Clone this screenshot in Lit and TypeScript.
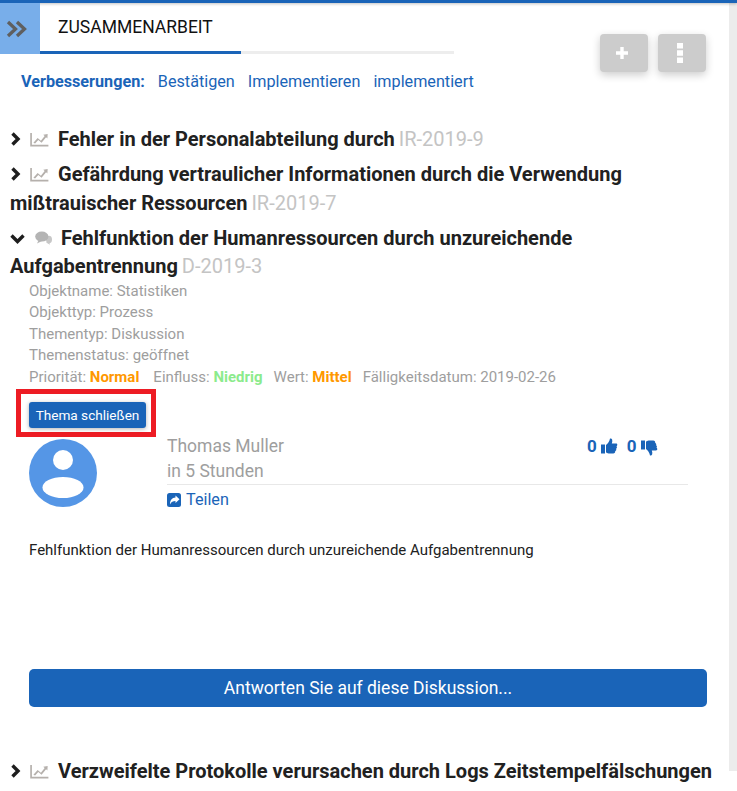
import { LitElement, html, css, svg } from "lit";
import { customElement } from "lit/decorators.js";

const chart = html`<svg class="ic" viewBox="0 0 20 16"><path d="M1 1v13.500h18.500" fill="none" stroke="#b5b0ac" stroke-width="1.800"/><path d="M3.500 11.500l4.500-5.200 3.500 3 4-5-1.500-1.300 4.700-.8-.3 4.800-1.400-1.400-4.800 5.800-3.500-3-3.400 3.800z" fill="#b5b0ac"/></svg>`;
const right = html`<svg class="ch" viewBox="0 0 11 14"><path d="M2.500 1.500l5.500 5.500-5.500 5.500" fill="none" stroke="#1e1e1e" stroke-width="3.400"/></svg>`;
const down = html`<svg class="chd" viewBox="0 0 15 12"><path d="M1.500 2.500l6 6 6-6" fill="none" stroke="#1e1e1e" stroke-width="3.400"/></svg>`;
const comments = html`<svg class="cm" viewBox="0 0 17 14"><ellipse cx="14" cy="8.500" rx="3" ry="3.800" fill="#c7c7c7"/><path d="M15 13.800l-4-2.300 3-1z" fill="#c7c7c7"/><ellipse cx="6.800" cy="5.600" rx="6.600" ry="5" fill="#b4b4b4"/><path d="M2 12.500l2-4 3 1.500z" fill="#b4b4b4"/></svg>`;
const thumb = svg`<path d="M0 6.500h4v9H0z"/><path d="M5 7c2-1.500 3.500-3.500 4-6.500 2-.5 3 1.500 1.800 5h4.200c1.800 0 1.500 2.300.5 2.700.8 1 .4 2.200-.4 2.500.5 1 0 2.200-.9 2.400.2 1.200-.5 2.400-2 2.400H9C7 15.500 6 15 5 14.500z"/>`;

@customElement("app-root")
export class AppRoot extends LitElement {
  static styles = css`
    :host { display: block; width: 737px; height: 791px; overflow: hidden; position: relative; background: #fff; font-family: Roboto, sans-serif; color: #212121; }
    * { box-sizing: border-box; }
    .topline { height: 3px; background: #1a64b8; box-shadow: 0 1px 3px rgba(0,0,0,.25); position: relative; }
    .wrap { display: flex; height: 788px; }
    .main { width: 729px; flex: none; position: relative; }
    .scroll { width: 8px; background: #ececec; height: 768px; }
    .tabs { display: flex; height: 51px; }
    .toggle { width: 40px; background: #78aeea; height: 51px; display: flex; align-items: center; justify-content: center; }
    .toggle svg { width: 22px; height: 18px; margin-left: -6px; }
    .tabbar { width: 414px; border-bottom: 3px solid #ededed; height: 51px; }
    .tab { width: 201px; height: 51px; border-bottom: 3px solid #1a64b8; padding: 14px 0 0 18px; font-size: 17.500px; line-height: 20px; color: #111; }
    .fabs { position: absolute; top: 31px; left: 600px; display: flex; gap: 10px; }
    .fab { width: 48px; height: 38px; border-radius: 4px; background: #cccccc; box-shadow: 0 3px 8px rgba(0,0,0,.2); display: flex; align-items: center; justify-content: center; color: #fff; }
    .fab svg { margin: 0 5px 1px 0; }
    .filters { display: flex; gap: 13px; padding: 18px 0 0 21px; font-size: 16.200px; line-height: 20px; color: #1a64b8; height: 61px; }
    .filters b { font-weight: 700; }
    .list { padding: 0 10px; }
    .item { font-size: 20px; font-weight: 700; line-height: 28.500px; color: #212121; margin: 0; width: 640px; }
    .item.first { margin-top: 10px; }
    .gap { margin-top: 6.500px; }
    .code { color: #c4c4c4; font-weight: 400; margin-left: -1px; }
    .ch { width: 11px; height: 14px; margin-right: 9px; }
    .chd { width: 15px; height: 12px; margin-right: 10px; }
    .ic { width: 19px; height: 15px; margin-right: 9px; vertical-align: -1px; }
    .cm { width: 17px; height: 14px; margin-right: 9px; vertical-align: 0; }
    .meta { padding: 0 0 0 29px; font-size: 15px; line-height: 21.500px; color: #9e9e9e; }
    .pri { display: flex; gap: 11px; }
    .pri b { font-weight: 700; }
    .pri span:first-child { margin-right: 3px; }
    .o { color: #ff9800; } .g { color: #8ceb8c; }
    .closebox { margin: 1px 0 0 16px; width: 140px; height: 48px; border: 5px solid #ed1c24; padding: 8px 0 0 8px; }
    .close { width: 117px; height: 26px; border: 0; padding: 0; background: #1a64b8; color: #fff; border-radius: 3px; font: 400 13.600px/26px Roboto, sans-serif; box-shadow: 0 1px 4px rgba(0,0,0,.3); display: block; text-align: center; }
    .post { display: flex; padding-left: 29px; margin-top: -3px; }
    .avatar { width: 68px; height: 68px; flex: none; margin-top: 5px; }
    .body { margin-left: 70px; width: 521px; position: relative; }
    .name { font-size: 17.500px; line-height: 25px; color: #9e9e9e; }
    .rule { border-top: 1px solid #e8e8e8; padding-top: 5px; font-size: 16.200px; line-height: 20px; color: #1a64b8; display: flex; align-items: center; gap: 5px; }
    .rule svg { width: 14px; height: 14px; }
    .votes { position: absolute; top: 2px; left: 420px; display: flex; align-items: center; font-size: 17px; font-weight: 700; color: #1a64b8; line-height: 20px; }
    .votes svg { width: 17px; height: 17px; fill: #1a64b8; margin-left: 4px; margin-right: 9px; }
    .votes svg.dn { transform: translateY(1px) scaleY(-1); }
    .text { padding: 30px 0 0 29px; font-size: 15px; line-height: 20px; color: #212121; }
    .reply { display: block; margin: 109px 0 0 29px; width: 678px; height: 38px; background: #1a64b8; border: 0; border-radius: 5px; color: #fff; font: 400 17.500px/38px Roboto, sans-serif; padding: 0; text-align: center; }
    .last { margin-top: 50px; width: 715px; white-space: nowrap; }
  `;

  render() {
    return html`
      <div class="topline"></div>
      <div class="wrap">
        <div class="main">
          <div class="tabs">
            <div class="toggle"><svg viewBox="0 0 22 18"><path d="M2 2l7.500 7-7.500 7M11 2l7.500 7-7.500 7" fill="none" stroke="#5f5f5f" stroke-width="3.300"/></svg></div>
            <div class="tabbar"><div class="tab">ZUSAMMENARBEIT</div></div>
          </div>
          <div class="fabs">
            <div class="fab"><svg width="14" height="14" viewBox="0 0 14 14"><path d="M7 1v12M1 7h12" stroke="#fff" stroke-width="3.400"/></svg></div>
            <div class="fab"><svg width="6" height="20" viewBox="0 0 6 20"><path d="M0 0h6v5.500H0zM0 7.200h6v5.600H0zM0 14.500h6V20H0z" fill="#fff"/></svg></div>
          </div>
          <div class="filters"><b>Verbesserungen:</b><span>Bestätigen</span><span>Implementieren</span><span>implementiert</span></div>
          <div class="list">
            <p class="item first">${right}${chart}Fehler in der Personalabteilung durch <span class="code">IR-2019-9</span></p>
            <p class="item gap">${right}${chart}Gefährdung vertraulicher Informationen durch die Verwendung mißtrauischer Ressourcen <span class="code">IR-2019-7</span></p>
            <p class="item gap">${down}${comments}Fehlfunktion der Humanressourcen durch unzureichende Aufgabentrennung <span class="code">D-2019-3</span></p>
          </div>
          <div class="meta">
            <div>Objektname: Statistiken</div>
            <div>Objekttyp: Prozess</div>
            <div>Thementyp: Diskussion</div>
            <div>Themenstatus: geöffnet</div>
            <div class="pri"><span>Priorität: <b class="o">Normal</b></span><span>Einfluss: <b class="g">Niedrig</b></span><span>Wert: <b class="o">Mittel</b></span><span>Fälligkeitsdatum: 2019-02-26</span></div>
          </div>
          <div class="closebox"><button class="close">Thema schließen</button></div>
          <div class="post">
            <svg class="avatar" viewBox="0 0 68 68"><circle cx="34" cy="34" r="34" fill="#5596e6"/><circle cx="34" cy="21" r="10" fill="#fff"/><ellipse cx="34" cy="48.500" rx="20.500" ry="10.500" fill="#fff"/></svg>
            <div class="body">
              <div class="name">Thomas Muller<br>in 5 Stunden</div>
              <div class="rule"><svg viewBox="0 0 14 14"><rect width="14" height="14" rx="2.500" fill="#1a64b8"/><path d="M8.500 2.500l4 3.700-4 3.700V8C6 8 4.200 8.800 3 11.500 2.800 7.500 5 4.700 8.500 4.500z" fill="#fff"/></svg>Teilen</div>
              <div class="votes">0<svg viewBox="0 0 17 17">${thumb}</svg>0<svg class="dn" viewBox="0 0 17 17">${thumb}</svg></div>
            </div>
          </div>
          <div class="text">Fehlfunktion der Humanressourcen durch unzureichende Aufgabentrennung</div>
          <button class="reply">Antworten Sie auf diese Diskussion...</button>
          <div class="list"><p class="item last">${right}${chart}Verzweifelte Protokolle verursachen durch Logs Zeitstempelfälschungen</p></div>
        </div>
        <div class="scroll"></div>
      </div>`;
  }
}
